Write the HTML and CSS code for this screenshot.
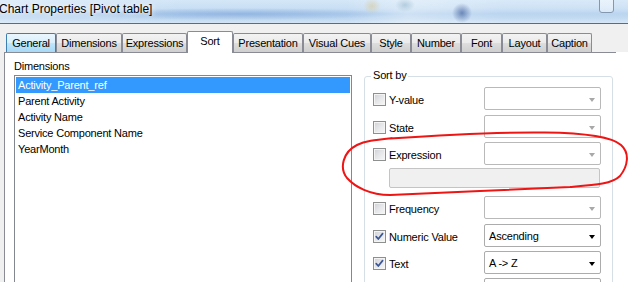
FILE: index.html
```html
<!DOCTYPE html>
<html>
<head>
<meta charset="utf-8">
<title>Chart Properties [Pivot table]</title>
<link rel="stylesheet" href="styles.css">
</head>
<body>
<div class="window">
  <div class="titlebar">
    <span class="title">Chart Properties [Pivot table]</span>
    <span class="capbtn"></span>
  </div>
  <div class="tabs">
    <div class="tab hover">General</div>
    <div class="tab">Dimensions</div>
    <div class="tab">Expressions</div>
    <div class="tab active">Sort</div>
    <div class="tab">Presentation</div>
    <div class="tab">Visual Cues</div>
    <div class="tab">Style</div>
    <div class="tab">Number</div>
    <div class="tab">Font</div>
    <div class="tab">Layout</div>
    <div class="tab">Caption</div>
  </div>
  <div class="body-row">
    <div class="gutter"></div>
    <div class="panel">
      <div class="dims">
        <div class="label">Dimensions</div>
        <ul class="listbox">
          <li class="selected">Activity_Parent_ref</li>
          <li>Parent Activity</li>
          <li>Activity Name</li>
          <li>Service Component Name</li>
          <li>YearMonth</li>
        </ul>
      </div>
      <div class="group">
        <span class="legend">Sort by</span>
        <div class="rows">
          <div class="row loose">
            <span class="check"></span><span class="cap">Y-value</span>
            <span class="combo disabled"><span class="value"></span><span class="arrow"></span></span>
          </div>
          <div class="row">
            <span class="check"></span><span class="cap">State</span>
            <span class="combo disabled"><span class="value"></span><span class="arrow"></span></span>
          </div>
          <div class="row">
            <span class="check"></span><span class="cap">Expression</span>
            <span class="combo disabled"><span class="value"></span><span class="arrow"></span></span>
          </div>
          <div class="exprbox"></div>
          <div class="row loose spaced">
            <span class="check"></span><span class="cap">Frequency</span>
            <span class="combo disabled"><span class="value"></span><span class="arrow"></span></span>
          </div>
          <div class="row">
            <span class="check checked"><svg viewBox="0 0 11 11" width="11" height="11"><path d="M2.2 5.6 L4.3 8 L8.6 2.6" /></svg></span><span class="cap">Numeric Value</span>
            <span class="combo"><span class="value">Ascending</span><span class="arrow"></span></span>
          </div>
          <div class="row">
            <span class="check checked"><svg viewBox="0 0 11 11" width="11" height="11"><path d="M2.2 5.6 L4.3 8 L8.6 2.6" /></svg></span><span class="cap">Text</span>
            <span class="combo"><span class="value">A -&gt; Z</span><span class="arrow"></span></span>
          </div>
          <div class="row">
            <span class="check"></span>
            <span class="combo"><span class="value"></span><span class="arrow"></span></span>
          </div>
        </div>
      </div>
    </div>
  </div>
  <svg class="markup" width="628" height="282" viewBox="0 0 628 282">
    <path d="M390 138.5 C440 135 500 132 545 132.5 C585 133 612 137 621 145 C630 153 628 166 620 176 C612 184 595 185 570 187 C520 189 440 193 390 195 C370 195 355 187 347 178 C339 168 343 152 357 145 C365 141 375 140 392 138.2" />
  </svg>
</div>
</body>
</html>
```

FILE: styles.css
```css
html, body {
  margin: 0;
  padding: 0;
}

body {
  width: 628px;
  height: 282px;
  overflow: hidden;
  background: #ffffff;
  font-family: "Liberation Sans", Arial, sans-serif;
  font-size: 11px;
  letter-spacing: -0.2px;
  color: #000;
}

.window {
  position: relative;
  width: 628px;
  height: 282px;
  overflow: hidden;
}

/* ---------- title bar ---------- */
.titlebar {
  position: relative;
  height: 23px;
  border-bottom: 1px solid #5e6b78;
  background:
    radial-gradient(ellipse 10px 10px at 462px 13px, rgba(70, 100, 160, 0.7), rgba(70, 100, 160, 0) 100%),
    radial-gradient(ellipse 9px 8px at 372px 6px, rgba(215, 200, 150, 0.55), rgba(215, 200, 150, 0) 100%),
    radial-gradient(ellipse 10px 7px at 405px 5px, rgba(150, 185, 205, 0.6), rgba(150, 185, 205, 0) 100%),
    radial-gradient(ellipse 160px 6px at 240px 14px, rgba(120, 160, 215, 0.55), rgba(120, 160, 215, 0) 100%),
    linear-gradient(to right, rgba(255, 255, 255, 0.25), rgba(255, 255, 255, 0) 30%, rgba(255, 255, 255, 0) 55%, rgba(255, 255, 255, 0.35) 65%, rgba(255, 255, 255, 0.1) 80%),
    linear-gradient(to bottom, #d4e7f8 0%, #c9dff4 35%, #b3d0ee 60%, #bdd7f0 80%, #d2e5f6 100%);
}

.title {
  display: block;
  margin-left: -1px;
  font-size: 12px;
  letter-spacing: 0;
  line-height: 18px;
  white-space: nowrap;
  text-shadow: 0 0 4px #ffffff, 0 0 8px rgba(255, 255, 255, 0.9);
}

.capbtn {
  position: absolute;
  left: 599px;
  top: -6px;
  width: 15px;
  height: 19px;
  box-sizing: border-box;
  border: 1px solid #8397ae;
  border-radius: 3px;
  background: linear-gradient(to bottom, rgba(255, 255, 255, 0.5), rgba(235, 244, 252, 0.6));
}

/* ---------- tabs ---------- */
.tabs {
  height: 28px;
  padding-left: 6px;
  background: #f0f0f0;
  display: grid;
  grid-template-columns: 50px 66px 65px 46px 70px 68px 40px 50px 41px 45px 45px;
  align-items: end;
}

.tab {
  height: 19px;
  box-sizing: border-box;
  border: 1px solid #898c95;
  border-bottom: none;
  border-radius: 2px 2px 0 0;
  background: linear-gradient(to bottom, #f3f3f3 0%, #ebebeb 48%, #dddddd 52%, #cfcfcf 100%);
  text-align: center;
  line-height: 18px;
  white-space: nowrap;
  overflow: hidden;
}

.tab.hover {
  border-color: #3c7fb1;
  background: linear-gradient(to bottom, #eaf6fd 0%, #d9f0fc 48%, #bee6fd 52%, #a7d9f5 100%);
}

.tab.active {
  position: relative;
  z-index: 1;
  height: 22px;
  margin-bottom: -1px;
  background: #ffffff;
  line-height: 18px;
}

/* ---------- panel ---------- */
.body-row {
  display: flex;
  height: 254px;
  background: #ffffff;
}

.gutter {
  width: 4px;
  background: #f0f0f0;
}

.panel {
  width: 612px;
  box-sizing: border-box;
  border-top: 1px solid #898c95;
  border-left: 1px solid #898c95;
  background: #ffffff;
  display: flex;
  align-items: flex-start;
  gap: 12px;
  padding-left: 9px;
}

.dims {
  padding-top: 7px;
  width: 338px;
}

.label {
  line-height: 13px;
  margin-bottom: 2px;
}

.listbox {
  list-style: none;
  margin: 0;
  padding: 1px;
  height: 400px;
  border: 1px solid #828790;
  box-sizing: border-box;
}

.listbox li {
  height: 16px;
  line-height: 16px;
  padding-left: 2px;
  white-space: nowrap;
}

.listbox li.selected {
  background: #3399ff;
  color: #ffffff;
}

/* ---------- sort by group ---------- */
.group {
  position: relative;
  margin-top: 23px;
  width: 249px;
  height: 400px;
  box-sizing: border-box;
  border: 1px solid #d5dfe5;
  border-radius: 3px;
  padding: 10px 11px 0 8px;
}

.legend {
  position: absolute;
  left: 6px;
  top: -8px;
  padding: 0 2px;
  background: #ffffff;
  line-height: 13px;
}

.rows {
  display: flex;
  flex-direction: column;
  gap: 4px;
}

.row {
  display: flex;
  align-items: center;
  height: 23px;
}

.row.loose {
  margin-bottom: 1px;
}

.row.spaced {
  margin-top: 4px;
}

.check {
  width: 13px;
  height: 13px;
  box-sizing: border-box;
  margin-top: 2px;
  border: 1px solid #8e8f8f;
  background: linear-gradient(135deg, #cdd0d4 0%, #e6e7e9 50%, #f7f7f7 100%);
  box-shadow: inset 0 0 0 1px #f4f4f4;
  display: flex;
  align-items: center;
  justify-content: center;
}

.check svg path {
  fill: none;
  stroke: #3b5797;
  stroke-width: 1.7;
  stroke-linecap: round;
  stroke-linejoin: round;
}

.cap {
  margin-left: 3px;
  padding-top: 3px;
  white-space: nowrap;
}

.combo {
  margin-left: auto;
  width: 117px;
  height: 23px;
  box-sizing: border-box;
  border: 1px solid #acacac;
  border-radius: 2px;
  background: #ffffff;
  display: flex;
  align-items: center;
  padding: 0 5px 0 4px;
}

.combo.disabled {
  border-color: #b9b9b9;
}

.value {
  flex: 1;
  white-space: nowrap;
}

.arrow {
  width: 0;
  height: 0;
  border-left: 3.5px solid transparent;
  border-right: 3.5px solid transparent;
  border-top: 4px solid #000000;
  margin-top: 2px;
}

.combo.disabled .arrow {
  border-top-color: #a8a8a8;
}

.exprbox {
  margin: -1px 0 0 16px;
  width: 211px;
  height: 20px;
  box-sizing: border-box;
  border: 1px solid #c4c4c4;
  border-radius: 2px;
  background: #f0f0f0;
}

/* ---------- annotation ---------- */
.markup {
  position: absolute;
  left: 0;
  top: 0;
  pointer-events: none;
}

.markup path {
  fill: none;
  stroke: #ee1515;
  stroke-width: 2;
  stroke-linecap: round;
  stroke-linejoin: round;
}
```
